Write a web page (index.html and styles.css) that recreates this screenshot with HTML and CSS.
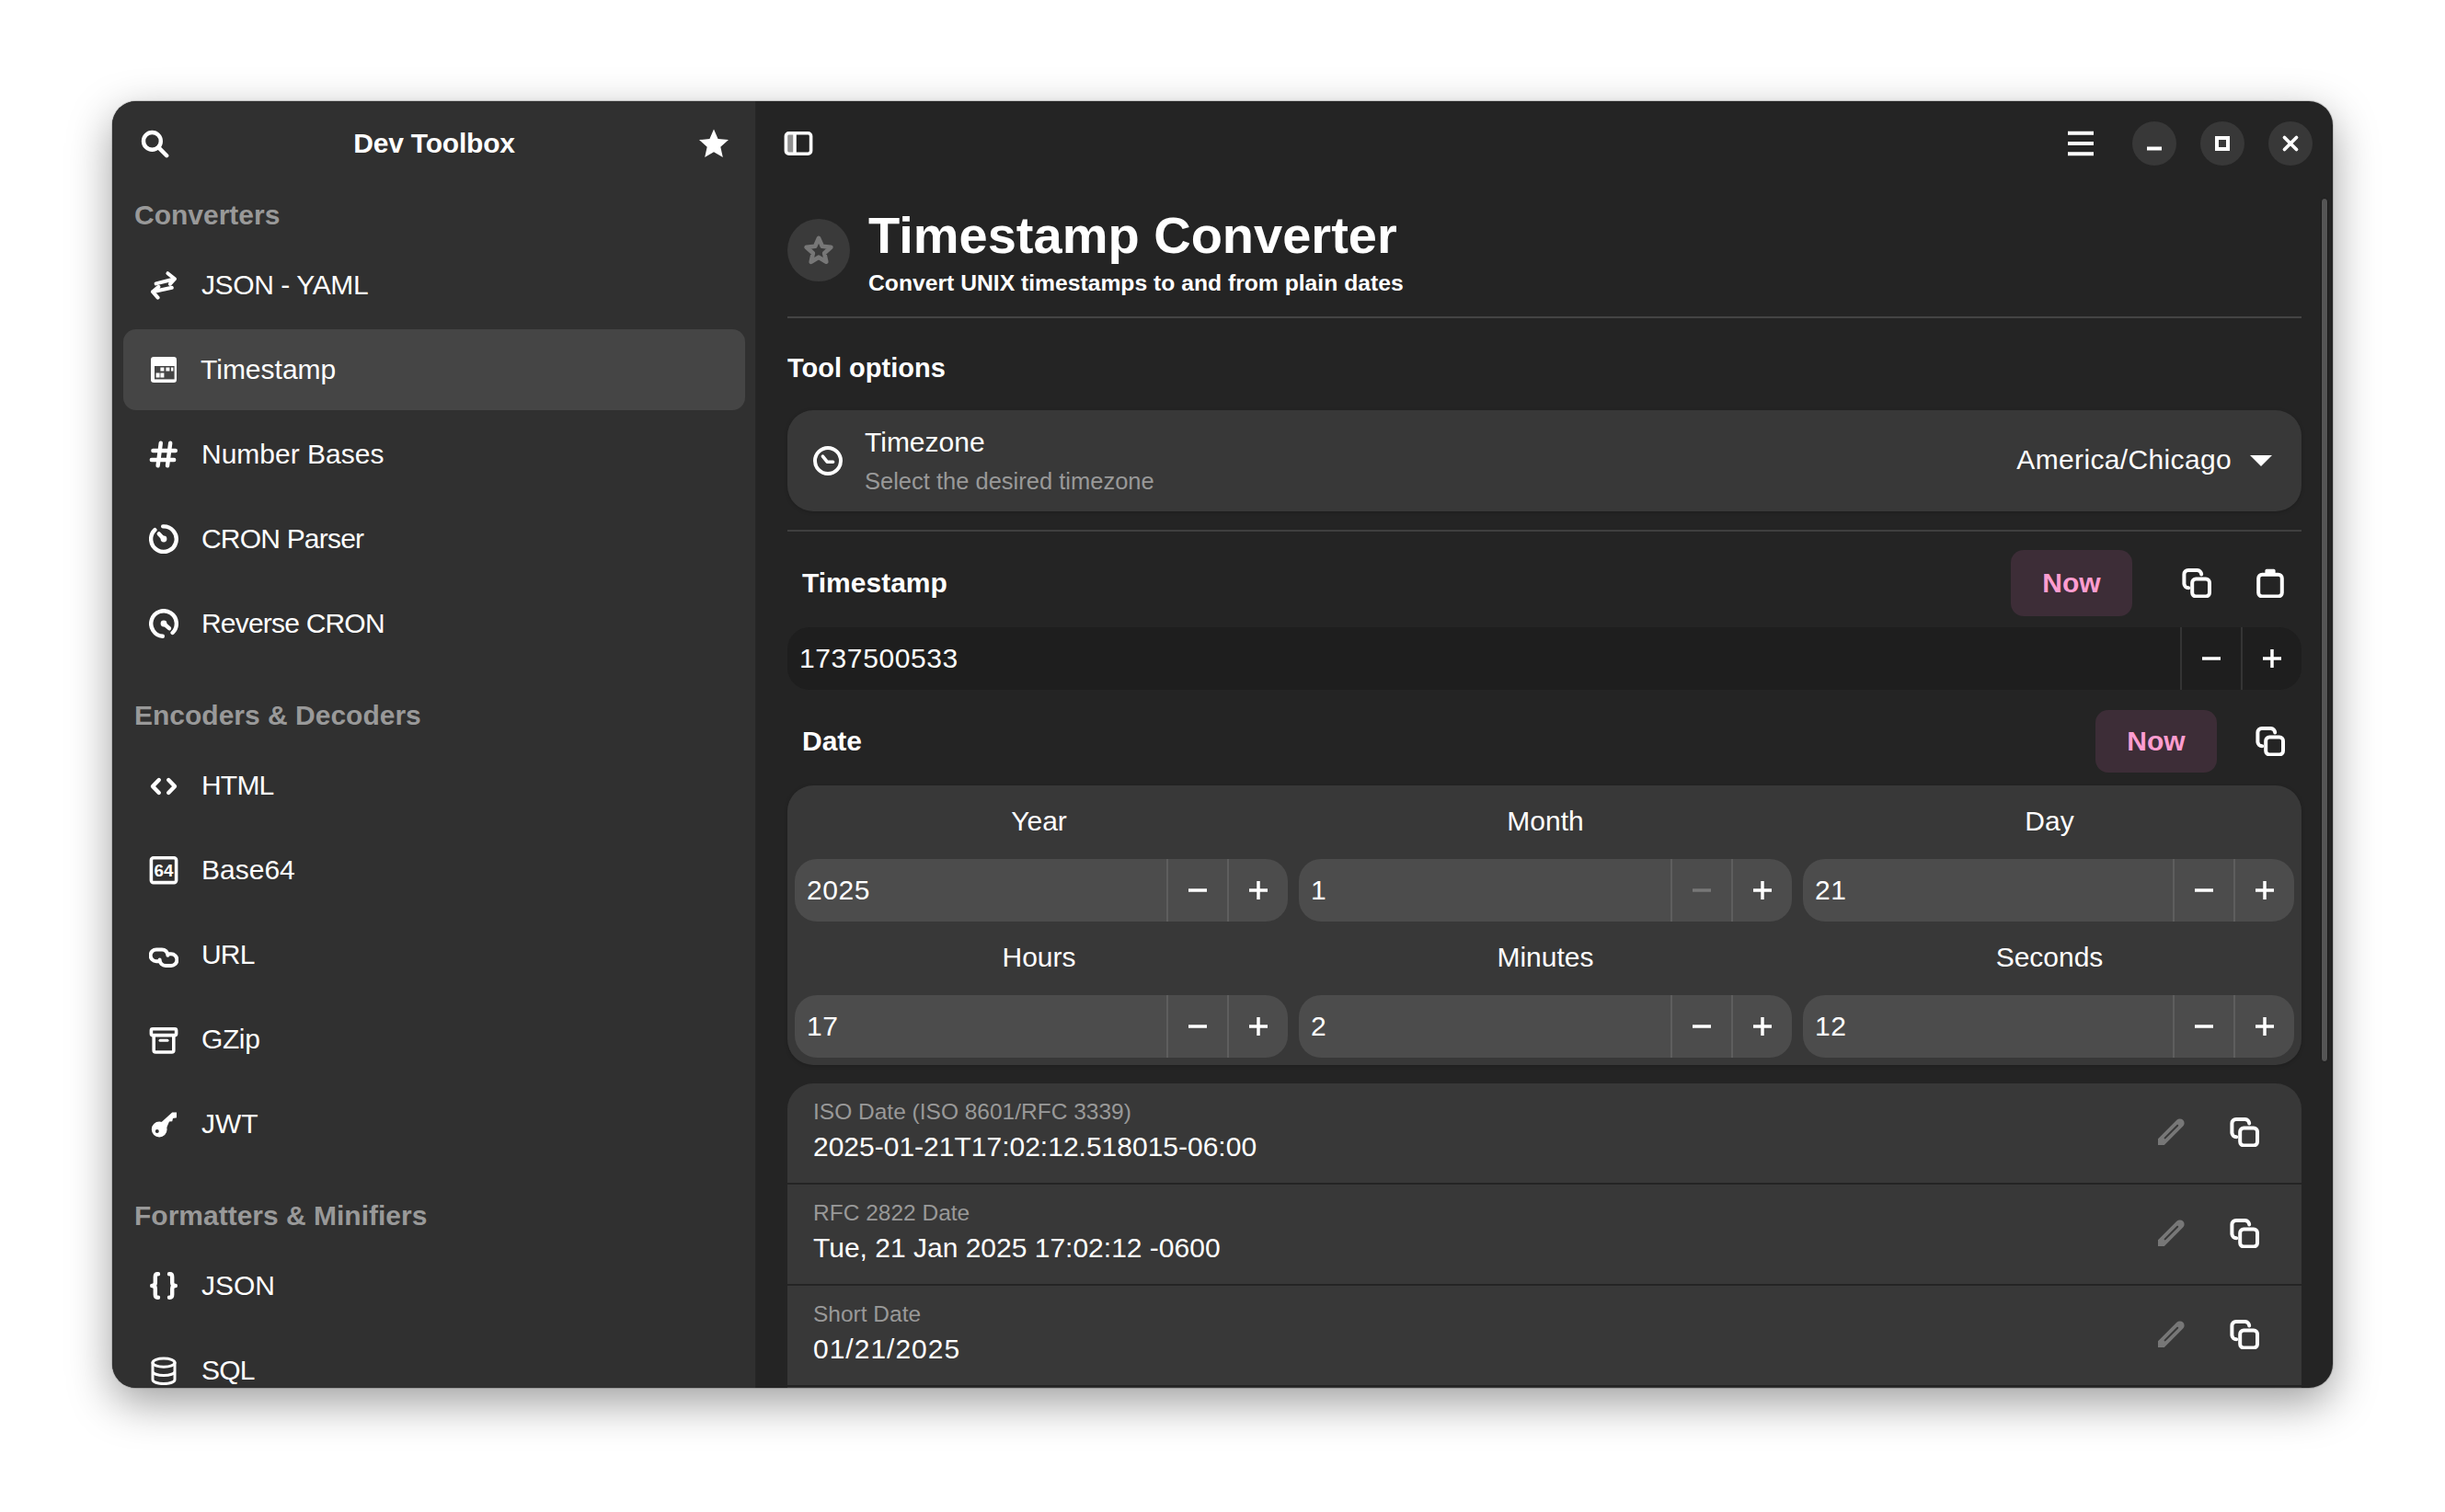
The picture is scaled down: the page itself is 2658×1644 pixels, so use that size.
FILE: index.html
```html
<!DOCTYPE html>
<html lang="en">
<head>
    <meta charset="UTF-8">
    <meta name="viewport" content="width=device-width, initial-scale=1.0">
    <title>Dev Toolbox</title>
    <link rel="stylesheet" href="styles.css">
</head>
<body>
<svg class="defs" width="0" height="0">
    <defs>
        <symbol id="i-search" viewBox="0 0 16 16"><circle cx="6.7" cy="6.7" r="4.7"/><path d="M10.2 10.2L14.6 14.6"/></symbol>
        <symbol id="i-star" viewBox="1 1 14 14"><path class="solid" stroke-linejoin="round" d="M8 1.2L10 5.8L15 6.3L11.2 9.6L12.3 14.6L8 12L3.7 14.6L4.8 9.6L1 6.3L6 5.8Z"/></symbol>
        <symbol id="i-star-line" viewBox="0 0 16 16"><path stroke-linejoin="round" d="M8 1.8L9.8 6L14.3 6.5L10.9 9.5L11.9 14L8 11.6L4.1 14L5.1 9.5L1.7 6.5L6.2 6Z"/></symbol>
        <symbol id="i-swap" viewBox="0 0 16 16"><path class="mid" d="M3.8 7.2L14 4.6M10.2 1.6L14 4.6L11.4 7.4"/><path class="mid" d="M12.4 9.4L2 11.6M5.2 8.9L2 11.6L4.8 14.8"/></symbol>
        <symbol id="i-calendar" viewBox="0 0 16 16">
            <rect class="solid" x="1" y="1" width="14" height="14" rx="1.6"/>
            <rect class="hole" x="3" y="6" width="10.8" height="7.2"/>
            <path class="solid none" d="M6.2 6.8h2v2h-2zM9.2 6.8h2v2h-2zM12 6.8h1.2v2h-1.2zM3.8 9.8h2v2.4h-2zM6.2 9.8h2v2.4h-2z"/>
        </symbol>
        <symbol id="i-hash" viewBox="0 0 16 16"><path d="M2.2 6H14.4M1.4 11H13.6M6.4 1.8L4.8 14.2M11.6 1.8L10 14.2"/></symbol>
        <symbol id="i-timer" viewBox="0 0 16 16"><path d="M7.6 1.2A6.9 6.9 0 1 1 3.2 3.1"/><path d="M5.4 5.2L8 8"/><circle class="solid" cx="8" cy="8" r="1.7"/></symbol>
        <symbol id="i-timer-rev" viewBox="0 0 16 16"><path d="M7.4 14.9A6.9 6.9 0 1 1 12.8 13"/><path d="M8 8L11 10.6"/><circle class="solid" cx="8" cy="8" r="1.7"/></symbol>
        <symbol id="i-code" viewBox="0 0 16 16"><path d="M5.4 5L2 8.5L5.4 12M10.6 5L14 8.5L10.6 12"/></symbol>
        <symbol id="i-base64" viewBox="0 0 16 16"><rect class="thin" x="1.2" y="1.4" width="13.6" height="13.4" rx="1.2"/><text x="8" y="11.4" text-anchor="middle">64</text></symbol>
        <symbol id="i-link" viewBox="0 0 16 16"><path class="mid" d="M5 11.6H4a3.2 3.2 0 0 1 0-6.4H7a3.2 3.2 0 0 1 3.2 3.2"/><path class="mid" d="M11 7.6h1a3.2 3.2 0 0 1 0 6.4H9a3.2 3.2 0 0 1-3.2-3.2"/></symbol>
        <symbol id="i-archive" viewBox="0 0 16 16"><rect class="thin" x="1.2" y="2.4" width="13.6" height="3.4" rx=".8"/><path class="thin" d="M2.6 6V14a1 1 0 0 0 1 1h8.8a1 1 0 0 0 1-1V6"/><path class="hair" d="M6 8.6h4"/></symbol>
        <symbol id="i-key" viewBox="0 0 16 16"><circle class="solid" cx="5.6" cy="11" r="4.2"/><path class="solid none" d="M6.4 7.4L12.6 1.8H15V4.6L13 5L12.6 6.6L11 6.8L9.6 10Z"/><circle class="hole-side" cx="4.4" cy="12" r="1"/></symbol>
        <symbol id="i-braces" viewBox="0 0 16 16"><path d="M5 1.6H4.6Q3.4 1.6 3.4 3.2V6.4Q3.4 8 1.6 8Q3.4 8 3.4 9.6V12.8Q3.4 14.4 4.6 14.4H5"/><path d="M11 1.6H11.4Q12.6 1.6 12.6 3.2V6.4Q12.6 8 14.4 8Q12.6 8 12.6 9.6V12.8Q12.6 14.4 11.4 14.4H11"/></symbol>
        <symbol id="i-database" viewBox="0 0 16 16"><ellipse class="hair" cx="8" cy="3.8" rx="6" ry="2.3"/><path class="hair" d="M2 3.8V13c0 1.3 2.7 2.3 6 2.3s6-1 6-2.3V3.8M2 8.5c0 1.3 2.7 2.3 6 2.3s6-1 6-2.3"/></symbol>
        <symbol id="i-toggle" viewBox="0 0 16 16"><rect class="solid half" x="1.6" y="3" width="4.4" height="10"/><rect class="thin" x="1.2" y="2.4" width="13.6" height="11.2" rx="1.6"/><path class="thin" d="M6 3V13"/></symbol>
        <symbol id="i-menu" viewBox="0 0 16 16"><path class="square" d="M1 2.4H15M1 8H15M1 13.6H15"/></symbol>
        <symbol id="i-clock" viewBox="0 0 16 16"><circle class="mid" cx="8" cy="8" r="7"/><path class="thin" d="M5.2 5.6L7.6 8.6H10.8"/></symbol>
        <symbol id="i-copy" viewBox="0 0 16 16"><rect class="mid" x="5.6" y="5.8" width="9.4" height="9.4" rx="2"/><path class="mid" d="M3.6 10.6A2.4 2.4 0 0 1 1.2 8.4V3.2A2.2 2.2 0 0 1 3.4 1H8.4A2.4 2.4 0 0 1 10.6 3.2"/></symbol>
        <symbol id="i-paste" viewBox="0 0 16 16"><rect class="mid" x="1.6" y="3.4" width="12.8" height="11.8" rx="2"/><rect class="solid" x="5.2" y=".4" width="5.6" height="3.6" rx=".8"/></symbol>
        <symbol id="i-pencil" viewBox="0 0 16 16"><path class="solid none" d="M1 15V11.6L11.2 1.4A2.4 2.4 0 0 1 14.6 4.8L4.4 15Z"/><path class="slit" d="M4.8 11.2L11.6 4.4"/></symbol>
        <symbol id="i-minus" viewBox="0 0 20 20"><path class="bar" d="M0 10H20"/></symbol>
        <symbol id="i-plus" viewBox="0 0 20 20"><path class="bar" d="M0 10H20M10 0V20"/></symbol>
    </defs>
</svg>

<div class="window">
    <aside class="sidebar">
        <div class="side-head">
            <svg class="icon"><use href="#i-search"/></svg>
            <span class="app-name">Dev Toolbox</span>
            <svg class="icon"><use href="#i-star"/></svg>
        </div>
        <nav class="side-nav">
            <div class="group-title">Converters</div>
            <a class="nav-row slim"><svg class="icon"><use href="#i-swap"/></svg>JSON - YAML</a>
            <a class="nav-row active"><svg class="icon"><use href="#i-calendar"/></svg>Timestamp</a>
            <a class="nav-row"><svg class="icon"><use href="#i-hash"/></svg>Number Bases</a>
            <a class="nav-row tight"><svg class="icon"><use href="#i-timer"/></svg>CRON Parser</a>
            <a class="nav-row tight"><svg class="icon"><use href="#i-timer-rev"/></svg>Reverse CRON</a>

            <div class="group-title">Encoders &amp; Decoders</div>
            <a class="nav-row tight"><svg class="icon"><use href="#i-code"/></svg>HTML</a>
            <a class="nav-row"><svg class="icon"><use href="#i-base64"/></svg>Base64</a>
            <a class="nav-row tight"><svg class="icon"><use href="#i-link"/></svg>URL</a>
            <a class="nav-row slim"><svg class="icon"><use href="#i-archive"/></svg>GZip</a>
            <a class="nav-row"><svg class="icon"><use href="#i-key"/></svg>JWT</a>

            <div class="group-title">Formatters &amp; Minifiers</div>
            <a class="nav-row"><svg class="icon"><use href="#i-braces"/></svg>JSON</a>
            <a class="nav-row tight"><svg class="icon"><use href="#i-database"/></svg>SQL</a>
        </nav>
    </aside>

    <section class="content">
        <header class="top-bar">
            <svg class="icon"><use href="#i-toggle"/></svg>
            <div class="top-right">
                <svg class="icon menu-icon"><use href="#i-menu"/></svg>
                <button class="win-btn">
                    <svg viewBox="0 0 16 16"><rect class="solid" x="0" y="11.5" width="16" height="4"/></svg>
                </button>
                <button class="win-btn">
                    <svg viewBox="0 0 16 16"><rect class="frame" x="2" y="2" width="12" height="12"/></svg>
                </button>
                <button class="win-btn">
                    <svg viewBox="0 0 16 16"><path class="cross" d="M1.5 1.5L14.5 14.5M14.5 1.5L1.5 14.5"/></svg>
                </button>
            </div>
        </header>

        <main class="main">
            <div class="page-head">
                <div class="fav-circle"><svg class="icon"><use href="#i-star-line"/></svg></div>
                <div>
                    <h1>Timestamp Converter</h1>
                    <p class="subtitle">Convert UNIX timestamps to and from plain dates</p>
                </div>
            </div>

            <h2 class="options-title">Tool options</h2>
            <div class="option-card">
                <svg class="icon"><use href="#i-clock"/></svg>
                <div class="option-text">
                    <div>Timezone</div>
                    <div class="muted">Select the desired timezone</div>
                </div>
                <div class="option-value"><span class="zone-name">America/Chicago</span><span class="caret"></span></div>
            </div>
            <hr class="rule">

            <div class="field-head first">
                <strong>Timestamp</strong>
                <button class="now-btn">Now</button>
                <svg class="icon"><use href="#i-copy"/></svg>
                <svg class="icon"><use href="#i-paste"/></svg>
            </div>
            <div class="spin dark">
                <div class="spin-value">1737500533</div>
                <div class="spin-btn"><svg class="pm"><use href="#i-minus"/></svg></div>
                <div class="spin-btn"><svg class="pm"><use href="#i-plus"/></svg></div>
            </div>

            <div class="field-head second">
                <strong>Date</strong>
                <button class="now-btn">Now</button>
                <svg class="icon"><use href="#i-copy"/></svg>
            </div>
            <div class="date-card">
                <div>
                    <div class="date-label">Year</div>
                    <div class="spin">
                        <div class="spin-value">2025</div>
                        <div class="spin-btn"><svg class="pm"><use href="#i-minus"/></svg></div>
                        <div class="spin-btn"><svg class="pm"><use href="#i-plus"/></svg></div>
                    </div>
                </div>
                <div>
                    <div class="date-label">Month</div>
                    <div class="spin">
                        <div class="spin-value">1</div>
                        <div class="spin-btn disabled"><svg class="pm"><use href="#i-minus"/></svg></div>
                        <div class="spin-btn"><svg class="pm"><use href="#i-plus"/></svg></div>
                    </div>
                </div>
                <div>
                    <div class="date-label">Day</div>
                    <div class="spin">
                        <div class="spin-value">21</div>
                        <div class="spin-btn"><svg class="pm"><use href="#i-minus"/></svg></div>
                        <div class="spin-btn"><svg class="pm"><use href="#i-plus"/></svg></div>
                    </div>
                </div>
                <div>
                    <div class="date-label">Hours</div>
                    <div class="spin">
                        <div class="spin-value">17</div>
                        <div class="spin-btn"><svg class="pm"><use href="#i-minus"/></svg></div>
                        <div class="spin-btn"><svg class="pm"><use href="#i-plus"/></svg></div>
                    </div>
                </div>
                <div>
                    <div class="date-label">Minutes</div>
                    <div class="spin">
                        <div class="spin-value">2</div>
                        <div class="spin-btn"><svg class="pm"><use href="#i-minus"/></svg></div>
                        <div class="spin-btn"><svg class="pm"><use href="#i-plus"/></svg></div>
                    </div>
                </div>
                <div>
                    <div class="date-label">Seconds</div>
                    <div class="spin">
                        <div class="spin-value">12</div>
                        <div class="spin-btn"><svg class="pm"><use href="#i-minus"/></svg></div>
                        <div class="spin-btn"><svg class="pm"><use href="#i-plus"/></svg></div>
                    </div>
                </div>
            </div>

            <div class="format-list">
                <div class="format-row">
                    <div class="format-text">
                        <div class="format-label">ISO Date (ISO 8601/RFC 3339)</div>
                        <div class="format-value">2025-01-21T17:02:12.518015-06:00</div>
                    </div>
                    <svg class="icon pencil"><use href="#i-pencil"/></svg>
                    <svg class="icon"><use href="#i-copy"/></svg>
                </div>
                <div class="format-row">
                    <div class="format-text">
                        <div class="format-label">RFC 2822 Date</div>
                        <div class="format-value">Tue, 21 Jan 2025 17:02:12 -0600</div>
                    </div>
                    <svg class="icon pencil"><use href="#i-pencil"/></svg>
                    <svg class="icon"><use href="#i-copy"/></svg>
                </div>
                <div class="format-row">
                    <div class="format-text">
                        <div class="format-label">Short Date</div>
                        <div class="format-value wide">01/21/2025</div>
                    </div>
                    <svg class="icon pencil"><use href="#i-pencil"/></svg>
                    <svg class="icon"><use href="#i-copy"/></svg>
                </div>
            </div>
        </main>
        <div class="scroll-thumb"></div>
    </section>
</div>
</body>
</html>
```

FILE: styles.css
```css
* {
    box-sizing: border-box;
}
html, body {
    height: 100%;
}
body {
    margin: 0;
    padding: 110px 122px 135px;
    overflow: hidden;
    background-color: #fff;
    color: #fff;
    font-family: "Liberation Sans", Arial, sans-serif;
    font-size: 30px;
}
.defs {
    position: absolute;
}

/* icons */
.icon {
    flex: none;
    width: 32px;
    height: 32px;
    color: #fff;
}
symbol {
    overflow: visible;
}
symbol * {
    fill: none;
    stroke: currentColor;
    stroke-width: 2.2;
    stroke-linecap: round;
    stroke-linejoin: round;
}
symbol .hair {
    stroke-width: 1.5;
}
symbol .thin {
    stroke-width: 1.8;
}
symbol .mid {
    stroke-width: 2;
}
symbol .square {
    stroke-width: 2;
    stroke-linecap: butt;
}
symbol .bar {
    stroke-width: 3.5;
    stroke-linecap: butt;
}
symbol .solid {
    fill: currentColor;
    stroke: none;
}
symbol .half {
    opacity: .5;
}
symbol .hole {
    fill: #454545;
    stroke: none;
}
symbol .hole-side {
    fill: #303030;
    stroke: none;
}
symbol text {
    fill: currentColor;
    stroke: none;
    font-family: "Liberation Sans", Arial, sans-serif;
    font-size: 9.4px;
    font-weight: 700;
}
symbol .slit {
    stroke: #383838;
    stroke-width: 1;
}
.pencil {
    color: #777;
}
.pm {
    width: 20px;
    height: 20px;
    color: #fff;
}

/* window */
.window {
    display: flex;
    height: 1399px;
    border-radius: 26px;
    overflow: hidden;
    background-color: #242424;
    box-shadow: 0 16px 48px rgba(0, 0, 0, 0.38), 0 0 0 1px rgba(0, 0, 0, 0.15);
}

/* sidebar */
.sidebar {
    flex: none;
    width: 699px;
    background-color: #303030;
    overflow: hidden;
}
.side-head {
    display: flex;
    align-items: center;
    justify-content: space-between;
    height: 91px;
    padding: 0 29px 0 30px;
}
.app-name {
    font-weight: 700;
    letter-spacing: -0.2px;
}
.side-nav {
    padding: 0 11px 0 12px;
}
.group-title {
    height: 36px;
    margin: 38px 0 14px 12px;
    line-height: 36px;
    font-weight: 700;
    color: #999;
}
.group-title:first-child {
    margin-top: 15px;
}
.nav-row {
    display: flex;
    align-items: center;
    gap: 25px;
    height: 88px;
    margin-bottom: 4px;
    padding-left: 28px;
    border-radius: 14px;
}
.nav-row:nth-last-child(1) {
    margin-bottom: 0;
}
.nav-row.active {
    gap: 24px;
    background-color: #454545;
}
.nav-row.slim {
    letter-spacing: -0.4px;
}
.nav-row.tight {
    letter-spacing: -0.8px;
}

/* content */
.content {
    position: relative;
    flex: 1;
    min-width: 0;
    display: flex;
    flex-direction: column;
    border-left: 1px solid #262626;
}
.top-bar {
    flex: none;
    display: flex;
    align-items: center;
    justify-content: space-between;
    height: 92px;
    padding: 0 22px 0 30px;
}
.top-right {
    display: flex;
    align-items: center;
    gap: 26px;
}
.menu-icon {
    margin-right: 14px;
}
.win-btn {
    display: flex;
    align-items: center;
    justify-content: center;
    width: 48px;
    height: 48px;
    padding: 0;
    border: none;
    border-radius: 50%;
    background-color: #383838;
}
.win-btn svg {
    width: 16px;
    height: 16px;
    overflow: visible;
}
.win-btn .solid {
    fill: #fff;
}
.win-btn .frame {
    fill: none;
    stroke: #fff;
    stroke-width: 4;
}
.win-btn .cross {
    fill: none;
    stroke: #fff;
    stroke-width: 3.8;
    stroke-linecap: round;
}
.scroll-thumb {
    position: absolute;
    top: 105px;
    right: 5px;
    width: 8px;
    height: 940px;
    border: 1px solid #1a1a1a;
    border-radius: 4px;
    background-color: #555;
}

.main {
    flex: 1;
    min-height: 0;
    overflow: hidden;
    padding: 0 34px 0 34px;
}
.page-head {
    display: flex;
    gap: 20px;
    height: 144px;
    padding-top: 30px;
    border-bottom: 2px solid #444;
}
.fav-circle {
    display: flex;
    align-items: center;
    justify-content: center;
    flex: none;
    width: 68px;
    height: 68px;
    margin-top: 6px;
    border-radius: 50%;
    background-color: #3a3a3a;
    color: #777;
}
.fav-circle .icon {
    width: 34px;
    height: 34px;
    color: #777;
}
h1 {
    margin: 0;
    font-size: 56px;
    line-height: 48px;
    font-weight: 700;
}
.subtitle {
    margin: 12px 0 0;
    font-size: 24.7px;
    line-height: 32px;
    font-weight: 700;
}
.options-title {
    margin: 36px 0 28px;
    font-size: 29px;
    line-height: 36px;
    font-weight: 700;
}
.option-card {
    display: flex;
    align-items: center;
    gap: 24px;
    height: 110px;
    padding: 0 32px 0 28px;
    border-radius: 28px;
    background-color: #383838;
    box-shadow: 0 1px 4px rgba(0, 0, 0, 0.2);
}
.option-text {
    flex: 1;
    display: flex;
    flex-direction: column;
    gap: 8px;
    line-height: 36px;
}
.muted {
    font-size: 25.5px;
    line-height: 32px;
    color: #999;
}
.option-value {
    display: flex;
    align-items: center;
    gap: 20px;
}
.zone-name {
    margin-bottom: 2px;
    letter-spacing: 0.35px;
}
.caret {
    width: 0;
    height: 0;
    border-left: 12px solid transparent;
    border-right: 12px solid transparent;
    border-top: 12px solid #fff;
}
.rule {
    height: 2px;
    margin: 20px 0 0;
    border: none;
    background-color: #3f3f3f;
}

/* timestamp and date */
.field-head {
    display: flex;
    align-items: center;
    padding: 0 18px 0 16px;
}
.field-head strong {
    flex: 1;
    font-size: 30px;
}
.field-head.first {
    height: 72px;
    margin-top: 20px;
    gap: 48px;
}
.field-head.first .now-btn {
    margin-right: 6px;
    height: 72px;
}
.field-head.second {
    height: 68px;
    margin-top: 22px;
    gap: 42px;
}
.now-btn {
    width: 132px;
    height: 68px;
    padding: 0;
    border: none;
    border-radius: 14px;
    background-color: #3d2d37;
    color: #ff9dd0;
    font-family: inherit;
    font-size: 30px;
    font-weight: 700;
}
.spin {
    display: flex;
    align-items: stretch;
    height: 68px;
    border-radius: 24px;
    background-color: #4c4c4c;
    overflow: hidden;
}
.spin.dark {
    margin-top: 12px;
    background-color: #1e1e1e;
}
.spin-value {
    flex: 1;
    padding-left: 13px;
    line-height: 68px;
    letter-spacing: 0.6px;
}
.spin-btn {
    display: flex;
    align-items: center;
    justify-content: center;
    width: 66px;
    border-left: 2px solid rgba(255, 255, 255, 0.1);
}
.spin-btn.disabled .pm {
    color: #777;
}
.date-card {
    display: grid;
    grid-template-columns: 536px 536px 1fr;
    gap: 8px 12px;
    margin-top: 14px;
    padding: 8px;
    border-radius: 28px;
    background-color: #383838;
    box-shadow: 0 1px 4px rgba(0, 0, 0, 0.2);
}
.date-label {
    height: 72px;
    padding-bottom: 10px;
    line-height: 62px;
    text-align: center;
}
.date-card > :nth-child(3n+1) .date-label {
    padding-right: 5px;
}
.date-card > :nth-child(3n) .date-label {
    padding-left: 2px;
}

/* formats */
.format-list {
    margin-top: 20px;
    padding-bottom: 20px;
    border-radius: 28px 28px 0 0;
    background-color: #383838;
}
.format-row {
    display: flex;
    align-items: center;
    gap: 48px;
    height: 110px;
    padding: 0 46px 2px 28px;
    border-bottom: 2px solid #242424;
}
.format-text {
    flex: 1;
    margin-bottom: 4px;
}
.format-label {
    font-size: 24.5px;
    line-height: 32px;
    color: #999;
}
.format-value {
    margin-top: 4px;
    line-height: 36px;
}
.format-value.wide {
    letter-spacing: 1px;
}
```
